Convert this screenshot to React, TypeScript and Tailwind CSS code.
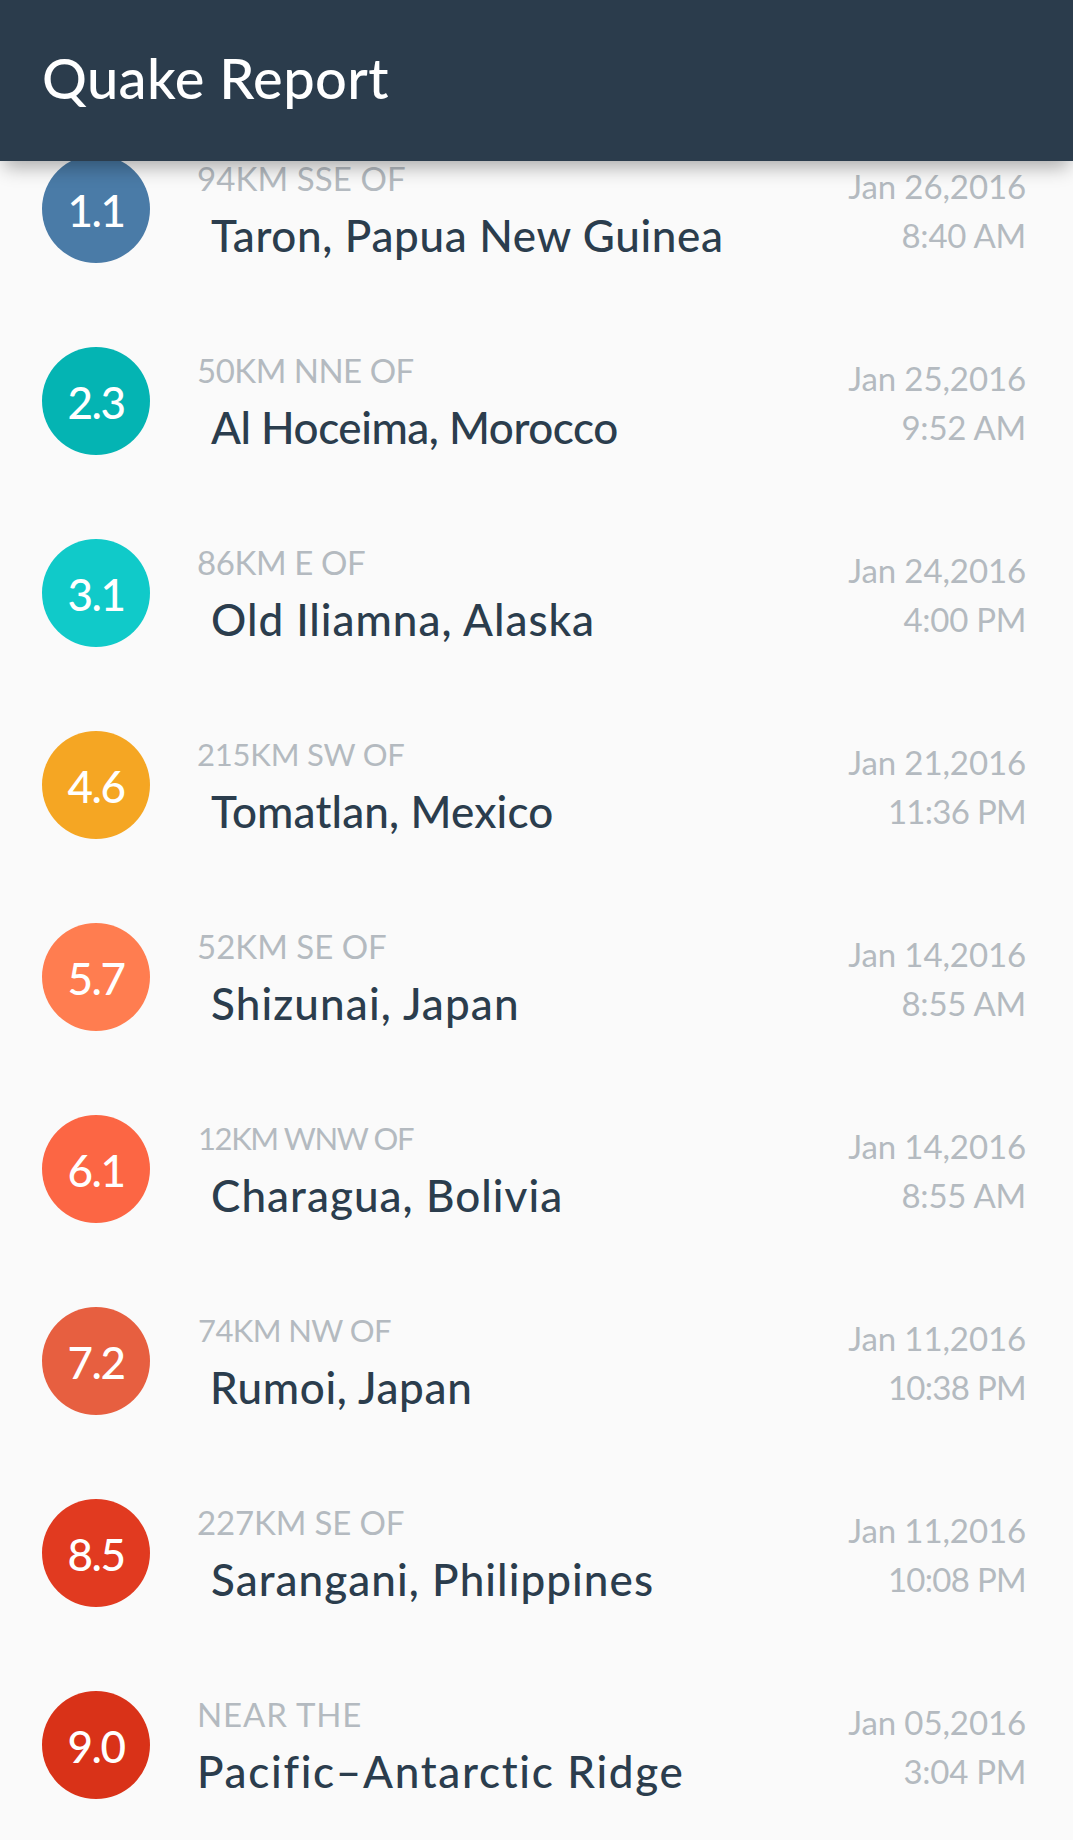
type Quake = {
  magnitude: string;
  color: string;
  offset: string;
  offsetClass: string;
  place: string;
  placeClass: string;
  date: string;
  time: string;
  timeClass: string;
};

const quakes: Quake[] = [
  { magnitude: "1.1", color: "bg-[#4A7BA7]", offset: "94KM SSE OF", offsetClass: "text-[33px] tracking-[0.1px]", place: "Taron, Papua New Guinea", placeClass: "pl-[14px] tracking-[0.66px]", date: "Jan 26,2016", time: "8:40 AM", timeClass: "tracking-[-0.2px]" },
  { magnitude: "2.3", color: "bg-[#04B4B3]", offset: "50KM NNE OF", offsetClass: "text-[33px] tracking-[-0.5px]", place: "Al Hoceima, Morocco", placeClass: "pl-[14px] tracking-[-0.48px]", date: "Jan 25,2016", time: "9:52 AM", timeClass: "tracking-[-0.2px]" },
  { magnitude: "3.1", color: "bg-[#10CAC9]", offset: "86KM E OF", offsetClass: "text-[33px] tracking-[-0.4px]", place: "Old Iliamna, Alaska", placeClass: "pl-[14px] tracking-[0.98px]", date: "Jan 24,2016", time: "4:00 PM", timeClass: "tracking-[-0.3px]" },
  { magnitude: "4.6", color: "bg-[#F5A623]", offset: "215KM SW OF", offsetClass: "text-[31px] tracking-[-0.2px]", place: "Tomatlan, Mexico", placeClass: "pl-[14px] tracking-[0.15px]", date: "Jan 21,2016", time: "11:36 PM", timeClass: "tracking-[-0.7px]" },
  { magnitude: "5.7", color: "bg-[#FF7D50]", offset: "52KM SE OF", offsetClass: "text-[33px] tracking-[0px]", place: "Shizunai, Japan", placeClass: "pl-[14px] tracking-[1.12px]", date: "Jan 14,2016", time: "8:55 AM", timeClass: "tracking-[-0.2px]" },
  { magnitude: "6.1", color: "bg-[#FC6644]", offset: "12KM WNW OF", offsetClass: "pl-px text-[31px] tracking-[-1.4px]", place: "Charagua, Bolivia", placeClass: "pl-[14px] tracking-[1.05px]", date: "Jan 14,2016", time: "8:55 AM", timeClass: "tracking-[-0.2px]" },
  { magnitude: "7.2", color: "bg-[#E75F40]", offset: "74KM NW OF", offsetClass: "pl-px text-[31px] tracking-[-0.6px]", place: "Rumoi, Japan", placeClass: "pl-[13px] tracking-[0.65px]", date: "Jan 11,2016", time: "10:38 PM", timeClass: "tracking-[-0.7px]" },
  { magnitude: "8.5", color: "bg-[#E13A20]", offset: "227KM SE OF", offsetClass: "text-[33px] tracking-[-0.15px]", place: "Sarangani, Philippines", placeClass: "pl-[14px] tracking-[1.06px]", date: "Jan 11,2016", time: "10:08 PM", timeClass: "tracking-[-0.7px]" },
  { magnitude: "9.0", color: "bg-[#D93218]", offset: "NEAR THE", offsetClass: "text-[33px] tracking-[0.85px]", place: "Pacific\u2013Antarctic Ridge", placeClass: "tracking-[1.7px]", date: "Jan 05,2016", time: "3:04 PM", timeClass: "tracking-[-0.3px]" },
];

function QuakeRow({ quake }: { quake: Quake }) {
  return (
    <li className="flex h-48 shrink-0 items-start pr-[47px] pl-[42px] whitespace-nowrap">
      <div className={`flex size-[108px] shrink-0 items-center justify-center rounded-full pt-0.5 text-[44px] leading-none font-medium tracking-[-1.5px] text-white ${quake.color}`}>
        {quake.magnitude}
      </div>
      <div className="ml-[47px] flex-1 pt-[3px]">
        <p className={`leading-[40px] text-[#B4BAC0] ${quake.offsetClass}`}>{quake.offset}</p>
        <p className={`mt-2.5 text-[44px] leading-[54px] font-medium text-[#2B3D4D] ${quake.placeClass}`}>{quake.place}</p>
      </div>
      <div className="pt-[7px] text-right text-[33px] leading-[49px] text-[#B4BAC0]">
        <p className="tracking-[-0.1px]">{quake.date}</p>
        <p className={quake.timeClass}>{quake.time}</p>
      </div>
    </li>
  );
}

export default function App() {
  return (
    <div className="flex h-[1840px] w-full flex-col overflow-hidden bg-[#FAFAFA] font-['Lato',sans-serif]">
      <header className="z-10 h-[161px] shrink-0 bg-[#2B3C4C] pl-[42px] shadow-[0_10px_18px_-4px_rgba(0,0,0,0.32)]">
        <h1 className="text-[56px] leading-[155px] font-medium tracking-[0.4px] text-white">Quake Report</h1>
      </header>
      <ul className="-mt-1.5 flex flex-col">
        {quakes.map((q) => (
          <QuakeRow key={q.place} quake={q} />
        ))}
      </ul>
    </div>
  );
}
